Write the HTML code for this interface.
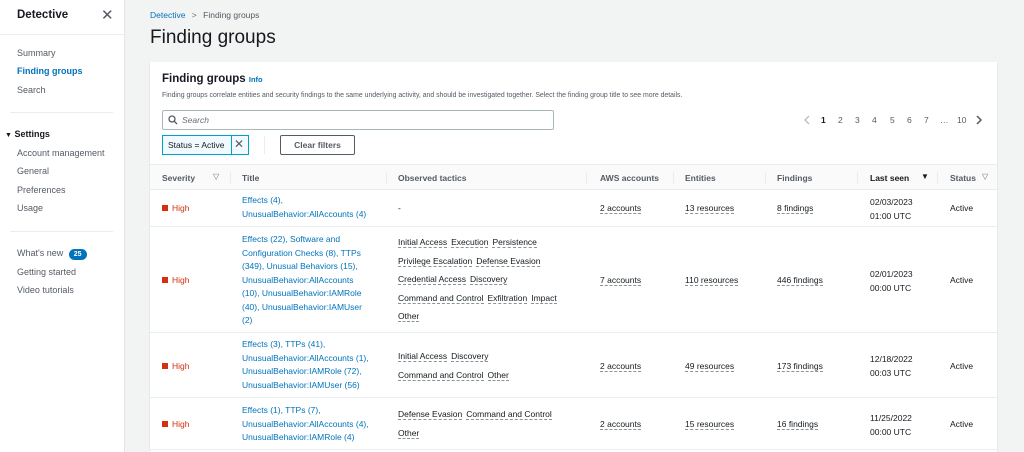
<!DOCTYPE html>
<html><head><style>
*{box-sizing:border-box;margin:0;padding:0}
html,body{width:1024px;height:452px;overflow:hidden}
body{background:#f2f3f3;font-family:"Liberation Sans",sans-serif;color:#16191f;position:relative}
.a{position:absolute;white-space:nowrap}
.side{position:absolute;left:0;top:0;width:125px;height:452px;background:#fff;border-right:1px solid #e4e6e6}
.side .a{font-size:9px;color:#545b64}
.card{position:absolute;left:150px;top:62px;width:847px;height:400px;background:#fff;box-shadow:0 1px 1px rgba(0,0,0,.2)}
.t{font-size:8.5px}
.lk{color:#0073bb;font-size:8.5px;line-height:13.5px}
.tac{font-size:8.5px;line-height:18.5px}
.tac span{border-bottom:1px dashed #879596;margin-right:4px}
.dl{border-bottom:1px dashed #879596}
.hr{position:absolute;left:0;width:847px;height:1px;background:#eaeded}
.hi{color:#d13212;font-size:8.5px}
.hi:before{content:"";display:inline-block;width:6px;height:6px;background:#d13212;margin-right:4px;vertical-align:0}
.th{font-size:8.5px;font-weight:bold;color:#545b64}
.vd{position:absolute;top:7px;width:1px;height:12px;background:#eaeded}
.pg{position:absolute;top:53px;font-size:8.5px;color:#545b64}
</style></head><body>
<div class="side">
<div class="a" style="left:17px;top:9px;font-size:11.5px;font-weight:bold;color:#16191f">Detective</div>
<div class="a" style="left:101px;top:6px;font-size:15px;color:#545b64">✕</div>
<div style="position:absolute;left:0;top:34px;width:125px;height:1px;background:#eaeded"></div>
<div class="a" style="left:17px;top:48px">Summary</div>
<div class="a" style="left:17px;top:66px;color:#0073bb;font-weight:bold">Finding groups</div>
<div class="a" style="left:17px;top:85px">Search</div>
<div style="position:absolute;left:10px;top:112px;width:103px;height:1px;background:#eaeded"></div>
<div class="a" style="left:5px;top:129px;color:#16191f;font-weight:bold"><span style="font-size:7px">▼</span> Settings</div>
<div class="a" style="left:17px;top:148px">Account management</div>
<div class="a" style="left:17px;top:166px">General</div>
<div class="a" style="left:17px;top:185px">Preferences</div>
<div class="a" style="left:17px;top:203px">Usage</div>
<div style="position:absolute;left:10px;top:231px;width:103px;height:1px;background:#eaeded"></div>
<div class="a" style="left:17px;top:248px">What's new <span style="display:inline-block;background:#0073bb;color:#fff;border-radius:7px;font-size:7px;padding:2px 5px;margin-left:3px;font-weight:bold">25</span></div>
<div class="a" style="left:17px;top:267px">Getting started</div>
<div class="a" style="left:17px;top:285px">Video tutorials</div>
</div>
<div class="a" style="left:150px;top:10px;font-size:8.5px;color:#0073bb">Detective <span style="color:#687078;margin:0 4px">&gt;</span> <span style="color:#545b64">Finding groups</span></div>
<div class="a" style="left:150px;top:27px;font-size:19px">Finding groups</div>
<div class="card">
<div class="a" style="left:12px;top:11px;font-size:11.5px;font-weight:bold">Finding groups <span style="font-size:7.5px;color:#0073bb">Info</span></div>
<div class="a" style="left:12px;top:30px;font-size:6.9px;color:#545b64">Finding groups correlate entities and security findings to the same underlying activity, and should be investigated together. Select the finding group title to see more details.</div>
<div style="position:absolute;left:12px;top:48px;width:392px;height:20px;border:1px solid #aab7b8;border-radius:2px"></div>
<svg style="position:absolute;left:18px;top:53px" width="10" height="10" viewBox="0 0 10 10"><circle cx="4" cy="4" r="3" fill="none" stroke="#545b64" stroke-width="1.3"/><path d="M6.2 6.2L9 9" stroke="#545b64" stroke-width="1.3"/></svg>
<div class="a" style="left:32px;top:53px;font-size:8.5px;font-style:italic;color:#687078">Search</div>
<div style="position:absolute;left:12px;top:73px;width:87px;height:20px;border:1px solid #00a1c9;background:#f1faff"></div>
<div style="position:absolute;left:81px;top:73px;width:1px;height:20px;background:#00a1c9"></div>
<div class="a" style="left:18px;top:78px;font-size:8.5px">Status = Active</div>
<div class="a" style="left:84px;top:75px;font-size:12px;color:#545b64">✕</div>
<div style="position:absolute;left:114px;top:74px;width:1px;height:18px;background:#eaeded"></div>
<div style="position:absolute;left:130px;top:73px;width:75px;height:20px;border:1px solid #545b64;border-radius:2px;font-size:8.5px;font-weight:bold;color:#545b64;text-align:center;line-height:18px">Clear filters</div>
<svg style="position:absolute;left:653px;top:53px" width="8" height="10" viewBox="0 0 8 10"><path d="M6 1L2 5L6 9" fill="none" stroke="#aab7b8" stroke-width="1.2"/></svg>
<div class="pg" style="left:671px;color:#16191f;font-weight:bold">1</div>
<div class="pg" style="left:688px">2</div>
<div class="pg" style="left:705px">3</div>
<div class="pg" style="left:722px">4</div>
<div class="pg" style="left:740px">5</div>
<div class="pg" style="left:757px">6</div>
<div class="pg" style="left:774px">7</div>
<div class="pg" style="left:790px">…</div>
<div class="pg" style="left:807px">10</div>
<svg style="position:absolute;left:825px;top:53px" width="8" height="10" viewBox="0 0 8 10"><path d="M2 1L6 5L2 9" fill="none" stroke="#545b64" stroke-width="1.5"/></svg>
<div class="hr" style="top:102px"></div>
<div style="position:absolute;left:0;top:103px;width:847px;height:24px;background:#fafafa"></div>
<div class="a th" style="left:12px;top:111px">Severity</div>
<div class="a" style="left:63px;top:110px;font-size:8px;color:#687078">▽</div>
<div class="vd" style="left:80px;top:110px"></div>
<div class="a th" style="left:92px;top:111px">Title</div>
<div class="vd" style="left:236px;top:110px"></div>
<div class="a th" style="left:248px;top:111px">Observed tactics</div>
<div class="vd" style="left:436px;top:110px"></div>
<div class="a th" style="left:450px;top:111px">AWS accounts</div>
<div class="vd" style="left:523px;top:110px"></div>
<div class="a th" style="left:535px;top:111px">Entities</div>
<div class="vd" style="left:615px;top:110px"></div>
<div class="a th" style="left:627px;top:111px">Findings</div>
<div class="vd" style="left:707px;top:110px"></div>
<div class="a th" style="left:720px;top:111px;color:#16191f">Last seen</div>
<div class="a" style="left:771px;top:110px;font-size:8px">▼</div>
<div class="vd" style="left:787px;top:110px"></div>
<div class="a th" style="left:800px;top:111px">Status</div>
<div class="a" style="left:832px;top:110px;font-size:8px;color:#687078">▽</div>
<div class="hr" style="top:127px"></div>

<div class="a hi" style="left:12px;top:141px">High</div>
<div class="a lk" style="left:92px;top:132px">Effects (4),<br>UnusualBehavior:AllAccounts (4)</div>
<div class="a t" style="left:248px;top:141px">-</div>
<div class="a t" style="left:450px;top:141px"><span class="dl">2 accounts</span></div>
<div class="a t" style="left:535px;top:141px"><span class="dl">13 resources</span></div>
<div class="a t" style="left:627px;top:141px"><span class="dl">8 findings</span></div>
<div class="a t" style="left:720px;top:133px;line-height:14px">02/03/2023<br>01:00 UTC</div>
<div class="a t" style="left:800px;top:141px">Active</div>
<div class="hr" style="top:164px"></div>

<div class="a hi" style="left:12px;top:213px">High</div>
<div class="a lk" style="left:92px;top:171px">Effects (22), Software and<br>Configuration Checks (8), TTPs<br>(349), Unusual Behaviors (15),<br>UnusualBehavior:AllAccounts<br>(10), UnusualBehavior:IAMRole<br>(40), UnusualBehavior:IAMUser<br>(2)</div>
<div class="a tac" style="left:248px;top:171px"><span>Initial Access</span><span>Execution</span><span>Persistence</span><br><span>Privilege Escalation</span><span>Defense Evasion</span><br><span>Credential Access</span><span>Discovery</span><br><span>Command and Control</span><span>Exfiltration</span><span>Impact</span><br><span>Other</span></div>
<div class="a t" style="left:450px;top:213px"><span class="dl">7 accounts</span></div>
<div class="a t" style="left:535px;top:213px"><span class="dl">110 resources</span></div>
<div class="a t" style="left:627px;top:213px"><span class="dl">446 findings</span></div>
<div class="a t" style="left:720px;top:205px;line-height:14px">02/01/2023<br>00:00 UTC</div>
<div class="a t" style="left:800px;top:213px">Active</div>
<div class="hr" style="top:270px"></div>

<div class="a hi" style="left:12px;top:299px">High</div>
<div class="a lk" style="left:92px;top:276px">Effects (3), TTPs (41),<br>UnusualBehavior:AllAccounts (1),<br>UnusualBehavior:IAMRole (72),<br>UnusualBehavior:IAMUser (56)</div>
<div class="a tac" style="left:248px;top:285px"><span>Initial Access</span><span>Discovery</span><br><span>Command and Control</span><span>Other</span></div>
<div class="a t" style="left:450px;top:299px"><span class="dl">2 accounts</span></div>
<div class="a t" style="left:535px;top:299px"><span class="dl">49 resources</span></div>
<div class="a t" style="left:627px;top:299px"><span class="dl">173 findings</span></div>
<div class="a t" style="left:720px;top:290px;line-height:14px">12/18/2022<br>00:03 UTC</div>
<div class="a t" style="left:800px;top:299px">Active</div>
<div class="hr" style="top:335px"></div>

<div class="a hi" style="left:12px;top:357px">High</div>
<div class="a lk" style="left:92px;top:342px">Effects (1), TTPs (7),<br>UnusualBehavior:AllAccounts (4),<br>UnusualBehavior:IAMRole (4)</div>
<div class="a tac" style="left:248px;top:343px"><span>Defense Evasion</span><span>Command and Control</span><br><span>Other</span></div>
<div class="a t" style="left:450px;top:357px"><span class="dl">2 accounts</span></div>
<div class="a t" style="left:535px;top:357px"><span class="dl">15 resources</span></div>
<div class="a t" style="left:627px;top:357px"><span class="dl">16 findings</span></div>
<div class="a t" style="left:720px;top:349px;line-height:14px">11/25/2022<br>00:00 UTC</div>
<div class="a t" style="left:800px;top:357px">Active</div>
<div class="hr" style="top:387px"></div>
</div>
</body></html>
